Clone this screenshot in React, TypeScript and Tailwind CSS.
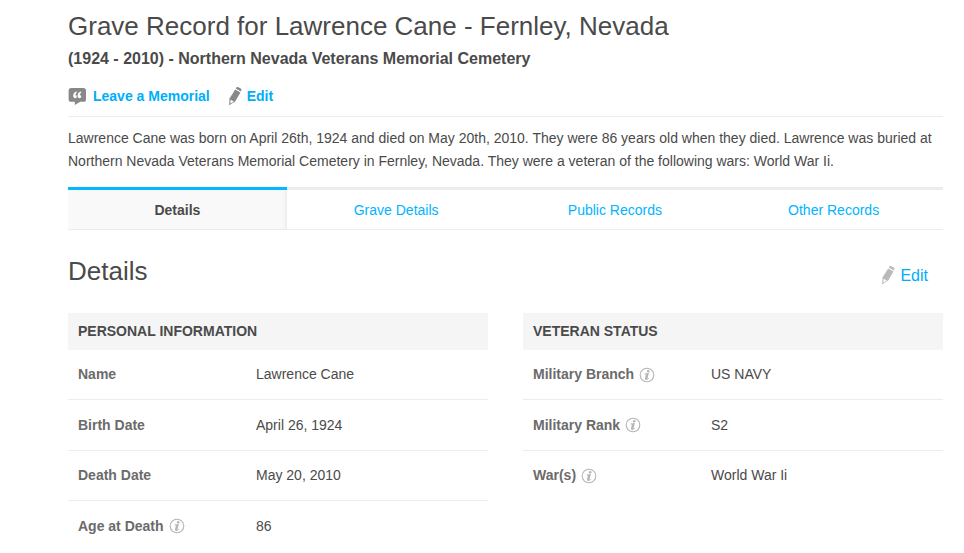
import React from 'react';

interface Row {
  label: string;
  value: string;
  info?: boolean;
}

interface RecordTableProps {
  title: string;
  rows: Row[];
}

const tabs = ['Details', 'Grave Details', 'Public Records', 'Other Records'];

const personal: Row[] = [
  { label: 'Name', value: 'Lawrence Cane' },
  { label: 'Birth Date', value: 'April 26, 1924' },
  { label: 'Death Date', value: 'May 20, 2010' },
  { label: 'Age at Death', value: '86', info: true },
];

const veteran: Row[] = [
  { label: 'Military Branch', value: 'US NAVY', info: true },
  { label: 'Military Rank', value: 'S2', info: true },
  { label: 'War(s)', value: 'World War Ii', info: true },
];

const QuoteIcon = () => (
  <svg viewBox="0 0 18 18" className="h-[18px] w-[18px] text-[#888888]" aria-hidden="true">
    <path
      fill="currentColor"
      d="M3 0h12.400A2.600 2.600 0 0 1 18 2.600v8.600a2.600 2.600 0 0 1-2.600 2.600h-3.200L6.800 17v-3.200H3.200A2.600 2.600 0 0 1 .6 11.200V2.600A2.600 2.600 0 0 1 3 0z"
    />
    <path
      fill="#fff"
      d="M8.700 3.600C6.500 4 5.200 5.600 5.200 7.700c0 1.600.8 2.500 1.900 2.500 1 0 1.700-.7 1.700-1.600s-.6-1.600-1.500-1.700c.1-.9.600-1.600 1.500-2.100zM13.100 3.600C10.900 4 9.600 5.600 9.600 7.700c0 1.600.8 2.500 1.900 2.500 1 0 1.700-.7 1.700-1.600s-.6-1.600-1.500-1.700c.1-.9.600-1.600 1.500-2.100z"
    />
  </svg>
);

const PencilIcon = ({ className }: { className: string }) => (
  <svg viewBox="0 1 14 20" className={`h-5 w-[14px] ${className}`} aria-hidden="true">
    <path fill="currentColor" d="M7.200 3.400 12.400 6.400 7.200 15.500 1.200 19.200 1.500 12.500z" />
    <path fill="currentColor" d="M7.700 2.600 8.600 1.200q.5-.6 1.300-.2l3.200 1.800q.7.500.3 1.300l-.6 1.400z" />
    <path fill="#fff" d="M2.600 13.700 5.900 15.400 2.900 17.400 2.300 17z" />
  </svg>
);

const InfoIcon = () => (
  <svg viewBox="0 0 16 16" className="h-4 w-4 text-[#b5b5b5]" aria-hidden="true">
    <circle cx="8" cy="8" r="6.800" fill="none" stroke="currentColor" strokeWidth="1.100" />
    <circle cx="9.200" cy="4.200" r="1.300" fill="currentColor" />
    <path
      fill="currentColor"
      d="M5.600 6.500 9.900 6.100 8.500 11.200q-.1.700.4.400l.9-.8.400.4Q8.600 13 7.200 13 5.600 12.900 6 11.300L6.900 7.500 5.500 7.300z"
    />
  </svg>
);

const RecordTable: React.FC<RecordTableProps> = ({ title, rows }) => (
  <table className="w-full table-fixed border-separate border-spacing-0 self-start text-left">
    <colgroup>
      <col className="w-[188px]" />
      <col />
    </colgroup>
    <thead>
      <tr className="h-[37px] bg-[#f5f5f5]">
        <th colSpan={2} className="px-[10px] font-bold uppercase">{title}</th>
      </tr>
    </thead>
    <tbody>
      {rows.map((row) => (
        <tr
          key={row.label}
          className="h-[50px] even:h-[51px] *:border-b *:border-[#ececec] last:*:border-transparent"
        >
          <th scope="row" className="pl-[10px] font-bold text-[#6b6b6b]">
            <span className="flex items-center gap-[5px]">
              {row.label}
              {row.info && <InfoIcon />}
            </span>
          </th>
          <td>{row.value}</td>
        </tr>
      ))}
    </tbody>
  </table>
);

export default function App() {
  return (
    <main className="bg-white pt-2 pr-[21px] pl-[68px] font-['Liberation_Sans',Arial,sans-serif] text-[14px] leading-[23px] text-[#4a4a4a]">
      <header className="border-b border-[#ececec] pb-2">
        <h1 className="text-[26px] leading-9">Grave Record for Lawrence Cane - Fernley, Nevada</h1>
        <h2 className="mt-[5px] text-base leading-5 font-bold">
          (1924 - 2010) - Northern Nevada Veterans Memorial Cemetery
        </h2>
        <div className="mt-4 flex items-center gap-[18px] font-bold text-[#00aef8]">
          <a href="#memorial" className="flex items-center gap-[7px]">
            <QuoteIcon />
            Leave a Memorial
          </a>
          <a href="#edit" className="flex items-center gap-[5px]">
            <PencilIcon className="text-[#888888]" />
            Edit
          </a>
        </div>
      </header>

      <p className="mt-[10px]">
        Lawrence Cane was born on April 26th, 1924 and died on May 20th, 2010. They were 86 years old when they died.
        Lawrence was buried at Northern Nevada Veterans Memorial Cemetery in Fernley, Nevada. They were a veteran of
        the following wars: World War Ii.
      </p>

      <nav className="mt-[14px] grid grid-cols-4 border-b border-[#ececec] text-center">
        {tabs.map((tab, i) => (
          <a
            key={tab}
            href={`#tab-${i}`}
            className={
              i === 0
                ? 'border-t-3 border-[#00b9ff] bg-[#f9f9f9] pt-[9px] pb-[7px] font-bold shadow-[inset_-5px_0_4px_-4px_#e6e6e6]'
                : 'border-t-3 border-[#ececec] pt-[9px] pb-[7px] text-[#00b4ff]'
            }
          >
            {tab}
          </a>
        ))}
      </nav>

      <section>
        <div className="mt-[23px] flex items-center justify-between pr-[15px]">
          <h2 className="text-[26px] leading-9">Details</h2>
          <a href="#edit-details" className="flex items-center gap-[5px] pt-[10px] text-base text-[#00aef8]">
            <PencilIcon className="text-[#b9b9b9]" />
            Edit
          </a>
        </div>
        <div className="mt-6 grid grid-cols-2 gap-[35px]">
          <RecordTable title="Personal Information" rows={personal} />
          <RecordTable title="Veteran Status" rows={veteran} />
        </div>
      </section>
    </main>
  );
}
